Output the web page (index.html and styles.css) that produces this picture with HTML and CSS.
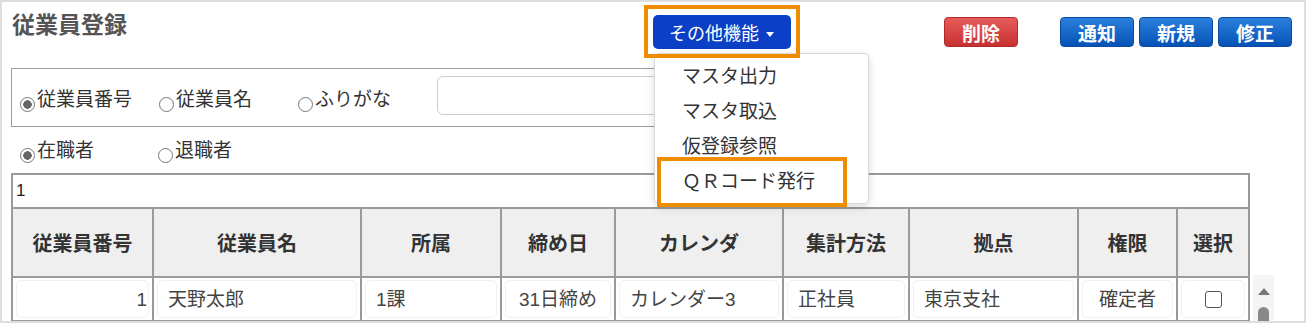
FILE: index.html
```html
<!DOCTYPE html>
<html lang="ja">
<head>
    <meta charset="UTF-8">
    <meta name="viewport" content="width=device-width, initial-scale=1.0">
    <title>従業員登録</title>

    <link rel="stylesheet" href="styles.css">
</head>
<body>
    <div class="screen">
        <header class="topbar">
            <h1 class="title">従業員登録</h1>

            <div class="more">
                <button class="btn btn-more">その他機能<span class="caret"></span></button>
                <ul class="menu">
                    <li class="menu-item">マスタ出力</li>
                    <li class="menu-item">マスタ取込</li>
                    <li class="menu-item">仮登録参照</li>
                    <li class="menu-item marked">ＱＲコード発行</li>
                </ul>
            </div>

            <div class="actions">
                <button class="btn btn-red">削除</button>
                <div class="btn-group">
                    <button class="btn btn-blue">通知</button>
                    <button class="btn btn-blue">新規</button>
                    <button class="btn btn-blue">修正</button>
                </div>
            </div>
        </header>

        <div class="search">
            <label class="opt"><span class="radio checked"></span>従業員番号</label>
            <label class="opt"><span class="radio"></span>従業員名</label>
            <label class="opt"><span class="radio"></span>ふりがな</label>
            <input type="text" class="search-input">
        </div>

        <div class="status">
            <label class="opt"><span class="radio checked"></span>在職者</label>
            <label class="opt"><span class="radio"></span>退職者</label>
        </div>

        <div class="grid">
            <table class="list">
                <colgroup>
                    <col style="width: 141px">
                    <col style="width: 208px">
                    <col style="width: 140px">
                    <col style="width: 114px">
                    <col style="width: 168px">
                    <col style="width: 126px">
                    <col style="width: 169px">
                    <col style="width: 99px">
                    <col style="width: 72px">
                </colgroup>
                <tr class="count-row">
                    <td colspan="9">1</td>
                </tr>
                <tr class="head-row">
                    <th>従業員番号</th>
                    <th>従業員名</th>
                    <th>所属</th>
                    <th>締め日</th>
                    <th>カレンダ</th>
                    <th>集計方法</th>
                    <th>拠点</th>
                    <th>権限</th>
                    <th>選択</th>
                </tr>
                <tr class="data-row">
                    <td><div class="cell right">1</div></td>
                    <td><div class="cell">天野太郎</div></td>
                    <td><div class="cell">1課</div></td>
                    <td><div class="cell center">31日締め</div></td>
                    <td><div class="cell">カレンダー3</div></td>
                    <td><div class="cell">正社員</div></td>
                    <td><div class="cell">東京支社</div></td>
                    <td><div class="cell center">確定者</div></td>
                    <td><div class="cell center"><span class="check"></span></div></td>
                </tr>
            </table>

            <div class="scrollbar">
                <span class="arrow-up"></span>
                <span class="thumb"></span>
            </div>
        </div>
    </div>
</body>
</html>
```

FILE: styles.css
```css
body {
    margin: 0;
    background-color: #ffffff;
    font-family: "Liberation Sans", "Noto Sans CJK JP", sans-serif;
    color: #333333;
}

.screen {
    width: 1306px;
    height: 323px;
    box-sizing: border-box;
    border: 2px solid #dedede;
    overflow: hidden;
}

/* top bar */
.topbar {
    display: flex;
    align-items: flex-start;
    height: 66px;
    box-sizing: border-box;
    padding: 10px 12px 0 10px;
}

.title {
    flex: 0 0 641px;
    margin: 0;
    font-size: 23px;
    line-height: 26px;
    font-weight: bold;
    color: #555555;
}

.btn {
    font-family: "Liberation Sans", "Noto Sans CJK JP", sans-serif;
    color: #ffffff;
    border: 0;
    padding: 0;
    cursor: pointer;
}

.more {
    position: relative;
    margin-top: 3px;
}

/* orange annotation around the button */
.more::after {
    content: "";
    position: absolute;
    left: -9px;
    top: -10px;
    right: -9px;
    bottom: -9px;
    border: 4px solid #f08c00;
    z-index: 3;
}

.btn-more {
    width: 138px;
    height: 34px;
    background-color: #0b40c6;
    border-radius: 5px;
    font-size: 18px;
    text-align: left;
    padding-left: 16px;
}

.caret {
    display: inline-block;
    margin-left: 7px;
    vertical-align: 3px;
    border-left: 4px solid transparent;
    border-right: 4px solid transparent;
    border-top: 5px solid #ffffff;
}

.menu {
    position: absolute;
    left: 1px;
    top: 38px;
    z-index: 2;
    width: 215px;
    margin: 0;
    padding: 5px 0 0 0;
    height: 151px;
    box-sizing: border-box;
    list-style-type: none;
    background-color: #ffffff;
    border: 1px solid #d8d8d8;
    border-radius: 5px;
    box-shadow: 0 3px 10px rgba(0, 0, 0, 0.15);
}

.menu-item {
    height: 35px;
    line-height: 35px;
    padding-left: 27px;
    font-size: 19px;
    color: #333333;
}

.marked {
    position: relative;
}

.marked::after {
    content: "";
    position: absolute;
    left: 2px;
    top: -7px;
    width: 190px;
    height: 50px;
    box-sizing: border-box;
    border: 4px solid #f08c00;
}

.actions {
    display: flex;
    margin-left: auto;
    margin-top: 5px;
}

.btn-group {
    display: flex;
    gap: 5px;
    margin-left: 42px;
}

.btn-red,
.btn-blue {
    width: 74px;
    height: 30px;
    border-radius: 4px;
    font-size: 19px;
    font-weight: bold;
}

.btn-red {
    background: linear-gradient(#e65c5a, #c83030);
    border: 1px solid #b02a2a;
}

.btn-blue {
    background: linear-gradient(#2a80dc, #0652b6);
    border: 1px solid #0a4aa0;
}

/* search box */
.search {
    display: flex;
    align-items: center;
    width: 839px;
    height: 59px;
    box-sizing: border-box;
    margin-left: 9px;
    padding-left: 8px;
    border: 1px solid #9c9c9c;
}

.opt {
    display: flex;
    align-items: flex-end;
    width: 139px;
    flex: 0 0 auto;
    font-size: 19px;
    line-height: 22px;
    padding-top: 5px;
    color: #333333;
}

.radio {
    display: inline-block;
    width: 15px;
    height: 15px;
    margin-right: 2px;
    margin-bottom: -1px;
    border: 1px solid #777777;
    border-radius: 50%;
    background-color: #ffffff;
    box-sizing: border-box;
}

.radio.checked {
    background: radial-gradient(circle, #666666 0, #666666 4px, #ffffff 4.5px);
}

.search-input {
    width: 400px;
    height: 39px;
    box-sizing: border-box;
    margin-top: -4px;
    border: 1px solid #cccccc;
    border-radius: 6px;
}

.status {
    display: flex;
    align-items: center;
    height: 46px;
    padding-left: 18px;
    padding-bottom: 4px;
    box-sizing: border-box;
}

.status .opt {
    width: 138px;
}

/* list */
.grid {
    display: flex;
    align-items: flex-start;
    margin-left: 9px;
}

.list {
    width: 1237px;
    table-layout: fixed;
    border-collapse: collapse;
    font-size: 19px;
}

.list td,
.list th {
    border: 2px solid #9a9a9a;
    padding: 0;
}

.count-row td {
    height: 32px;
    padding-left: 3px;
    font-size: 17px;
    color: #222222;
}

.head-row th {
    height: 67px;
    background-color: #efefef;
    font-size: 20px;
    font-weight: bold;
    color: #333333;
}

.data-row td {
    height: 40px;
    padding: 1px 3px;
}

.cell {
    height: 38px;
    line-height: 38px;
    box-sizing: border-box;
    padding: 0 10px;
    border: 1px solid #f0f0f0;
    border-radius: 5px;
    color: #444444;
    white-space: nowrap;
}

.right {
    text-align: right;
    padding-right: 1px;
}

.center {
    text-align: center;
    padding: 0;
}

.check {
    display: inline-block;
    width: 17px;
    height: 17px;
    box-sizing: border-box;
    vertical-align: -2px;
    border: 1px solid #555555;
    border-radius: 3px;
}

.scrollbar {
    display: flex;
    flex-direction: column;
    align-items: center;
    width: 21px;
    height: 60px;
    margin-top: 102px;
    margin-left: 3px;
    background-color: #f4f4f4;
}

.arrow-up {
    margin-top: 13px;
    border-left: 6px solid transparent;
    border-right: 6px solid transparent;
    border-bottom: 7px solid #777777;
}

.thumb {
    width: 11px;
    height: 30px;
    margin-top: 12px;
    border-radius: 6px 6px 0 0;
    background-color: #888888;
}
```
